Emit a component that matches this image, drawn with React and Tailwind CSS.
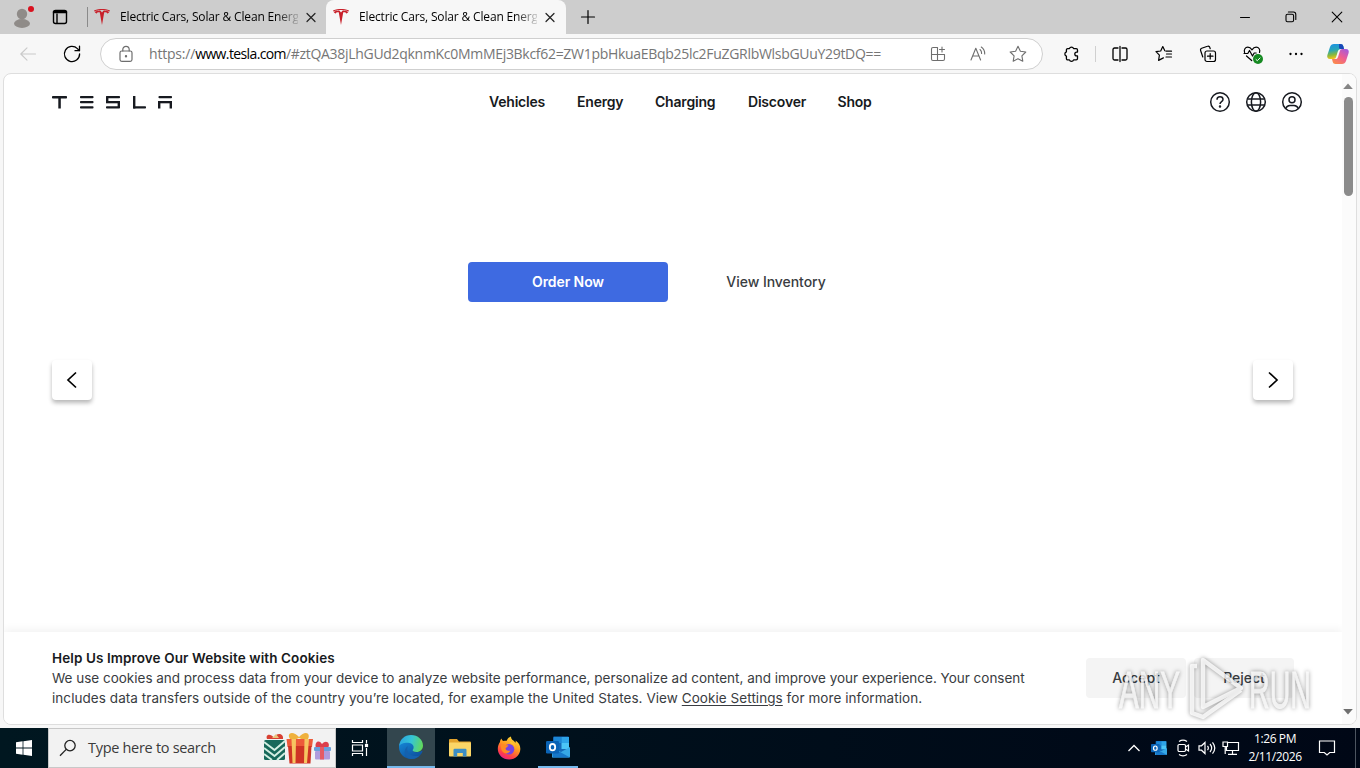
import { SiTesla } from 'react-icons/si';

const Icon = ({ size = 20, sw = 1.2, className = '', children }) => (
    <svg
        width={size}
        height={size}
        viewBox="0 0 20 20"
        fill="none"
        stroke="currentColor"
        strokeWidth={sw}
        strokeLinecap="round"
        strokeLinejoin="round"
        className={className}
    >
        {children}
    </svg>
);

const navItems = [
    { label: 'Vehicles', width: 'w-14' },
    { label: 'Energy', width: 'w-[46px]' },
    { label: 'Charging', width: 'w-[61px]' },
    { label: 'Discover', width: 'w-[57.5px]' },
    { label: 'Shop', width: 'w-[34px]' }
];

function TabTitle() {
    return (
        <span className="w-[178px] overflow-hidden whitespace-nowrap text-[12px] tracking-[-0.16px] text-black [mask-image:linear-gradient(to_right,black_156px,transparent_182px)]">
            Electric Cars, Solar &amp; Clean Energy
        </span>
    );
}

function CloseIcon() {
    return (
        <Icon size={20} sw={1.2} className="text-[#222]">
            <path d="M6 6.500l8 8M14 6.500l-8 8" />
        </Icon>
    );
}

function TabBar() {
    return (
        <div className="flex h-[34px] items-center bg-[#cdcdcd]">
            <div className="relative ml-2 flex w-7 justify-center">
                <svg width="20" height="22" viewBox="0 0 20 22" fill="#8f8b88">
                    <circle cx="10" cy="8" r="5.2" />
                    <ellipse cx="10" cy="17.500" rx="8" ry="4.4" />
                </svg>
                <span className="absolute top-0 right-[2px] h-1.5 w-1.5 rounded-full bg-[#d9121f]" />
            </div>
            <div className="flex w-12 justify-center text-black">
                <Icon size={20} sw={1.4}>
                    <rect x="3.5" y="3.5" width="13" height="13" rx="2" />
                    <path d="M4 5h12" strokeWidth="2.500" />
                    <path d="M7 7v9" />
                </Icon>
            </div>
            <div className="ml-[3px] h-5 w-px bg-[#8a8a8a]" />
            <div className="flex w-[238px] items-center pl-1.5">
                <SiTesla size={16} color="#c8202a" />
                <span className="w-[10px]" />
                <TabTitle />
                <span className="ml-[3px]"><CloseIcon /></span>
            </div>
            <div className="flex h-full w-[240px] items-center rounded-t-lg bg-[#f7f7f7] pl-[7px]">
                <SiTesla size={16} color="#c8202a" />
                <span className="w-[10px]" />
                <TabTitle />
                <span className="ml-[3px]"><CloseIcon /></span>
            </div>
            <div className="ml-[12px] text-black">
                <Icon sw={1.2}><path d="M3.5 10h13M10 3.5v13" /></Icon>
            </div>
            <div className="ml-auto flex items-center text-black">
                <div className="flex w-[46px] justify-center">
                    <Icon sw={1}><path d="M5.5 10.5h9" /></Icon>
                </div>
                <div className="flex w-[46px] justify-center">
                    <Icon sw={1.1}>
                        <rect x="5" y="7.2" width="7.6" height="7.6" rx="1.5" />
                        <path d="M7.4 5h5a2.4 2.4 0 0 1 2.4 2.4v5" />
                    </Icon>
                </div>
                <div className="flex w-[46px] justify-center">
                    <Icon sw={1.1}><path d="M5.2 5.2l9.6 9.6M14.8 5.2l-9.6 9.6" /></Icon>
                </div>
            </div>
        </div>
    );
}

function CopilotIcon() {
    return (
        <svg width="24" height="24" viewBox="0 0 24 24">
            <defs>
                <linearGradient id="cpA" x1="0" y1="0" x2="0.2" y2="1">
                    <stop offset="0" stopColor="#1b8fe8" />
                    <stop offset="0.45" stopColor="#28a6b8" />
                    <stop offset="0.75" stopColor="#86b840" />
                    <stop offset="1" stopColor="#f0c31c" />
                </linearGradient>
                <linearGradient id="cpB" x1="0.9" y1="0" x2="0.2" y2="1">
                    <stop offset="0" stopColor="#a05be0" />
                    <stop offset="0.5" stopColor="#ee5d93" />
                    <stop offset="1" stopColor="#fb8a4a" />
                </linearGradient>
            </defs>
            <path d="M8 2h6.5c1.6 0 2.3.8 2.8 2.2L18 7h-3c-2 0-2.7 1-3.2 2.6l-1.6 5.2C9.7 16.300 9 17 7.500 17H4c-2.300 0-3.300-1.700-2.600-4L4 5c.7-2 1.900-3 4-3z" fill="url(#cpA)" />
            <path d="M13 2h1.500c1.600 0 2.300.8 2.800 2.200L18 7h-3c-1 0-1.700-.3-2-1.300z" fill="#1948b8" />
            <path d="M16 22H9.500c-1.600 0-2.300-.8-2.800-2.200L6 17h3c2 0 2.700-1 3.200-2.600l1.600-5.200C14.300 7.700 15 7 16.500 7H20c2.300 0 3.300 1.700 2.600 4L20 19c-.7 2-1.900 3-4 3z" fill="url(#cpB)" />
        </svg>
    );
}

function Toolbar() {
    return (
        <div className="flex h-[39px] items-center bg-[#f7f7f7] pl-1.5 text-black">
            <div className="flex w-11 justify-center text-[#c9c9c9]">
                <Icon sw={1.1}><path d="M17.500 10H2.800M9 3.800L2.800 10 9 16.200" /></Icon>
            </div>
            <div className="flex w-11 justify-center">
                <Icon sw={1.3}>
                    <path d="M17.600 10A7.600 7.600 0 1 1 15.400 4.600L17.200 6.500" />
                    <path d="M17.500 2.200v4.500H13" />
                </Icon>
            </div>
            <div className="mt-px ml-1.5 flex h-8 w-[943px] items-center rounded-full border border-[#cfcfcf] bg-white pr-1 pl-[15px] text-[#6e6e6e]">
                <Icon sw={1.2}>
                    <rect x="4" y="7" width="12" height="10.300" rx="1.800" />
                    <path d="M6.800 7V5.500a3.200 3.200 0 0 1 6.400 0V7" />
                    <circle cx="10" cy="12.200" r="0.600" fill="currentColor" />
                </Icon>
                <span className="mb-0.5 ml-[13px] flex-1 text-[14px] whitespace-nowrap text-[#767676]">
                    <span className="tracking-[-0.2px]">https://</span>
                    <span className="tracking-[-0.62px] text-black">www.tesla.com</span>
                    <span className="tracking-[-0.3px]">/#ztQA38jLhGUd2qknmKc0MmMEj3Bkcf62=ZW1pbHkuaEBqb25lc2FuZGRlbWlsbGUuY29tDQ==</span>
                </span>
                <span className="flex w-10 justify-center">
                    <Icon sw={1.1}>
                        <path d="M9.500 3.500H5A1.500 1.500 0 0 0 3.500 5v10A1.500 1.500 0 0 0 5 16.500h10a1.500 1.500 0 0 0 1.500-1.500v-4.500h-13M9.500 3.500v13M14 3v5M11.500 5.500h5" />
                    </Icon>
                </span>
                <span className="flex w-10 justify-center">
                    <Icon sw={1.1}>
                        <path d="M3 16L7.800 4.200 12.600 16M4.600 12H11M12 5.500c1.200 1 1.700 2.300 1.600 4M13.300 3c2.300 1.600 3.500 4 3.400 7" />
                    </Icon>
                </span>
                <span className="flex w-10 justify-center">
                    <Icon sw={1.1}>
                        <path d="M10 2.300l2.400 4.900 5.400.8-3.900 3.800.9 5.400L10 14.700l-4.800 2.500.9-5.400L2.200 8l5.400-.8z" />
                    </Icon>
                </span>
            </div>
            <div className="ml-1.5 flex w-11 justify-center">
                <Icon sw={1.3}>
                    <path d="M6.700 4.600H8.400a2.200 2.200 0 0 1 4.200 0h2.600a1.300 1.300 0 0 1 1.300 1.300V8.100h-.8a1.900 1.900 0 0 0 0 3.800h.8v2.700a1.300 1.300 0 0 1-1.300 1.300H12.600a2.200 2.200 0 0 1-4.200 0H6.700a1.300 1.300 0 0 1-1.300-1.300V12.100a2.200 2.200 0 0 1 0-4.200V5.900a1.300 1.300 0 0 1 1.300-1.300z" />
                </Icon>
            </div>
            <div className="ml-0.5 h-4 w-px bg-[#d0d0d0]" />
            <div className="ml-0.5 flex w-11 justify-center">
                <Icon sw={1.3}>
                    <path d="M8 4H4.500A1.500 1.500 0 0 0 3 5.500v9A1.500 1.500 0 0 0 4.500 16H8M12 4h3.500A1.500 1.500 0 0 1 17 5.500v9a1.500 1.500 0 0 1-1.500 1.500H12M10 2.500v15" />
                </Icon>
            </div>
            <div className="flex w-11 justify-center">
                <Icon sw={1.2}>
                    <path d="M12 7.200h5.500M12.500 10h5M12 13h5.500M10.800 6.700L8.800 2.500 6.700 7l-4.700.7 3.400 3.400-.8 5.300 4.800-2.500" />
                </Icon>
            </div>
            <div className="flex w-11 justify-center">
                <Icon sw={1.2}>
                    <rect x="7" y="7" width="10.500" height="10.500" rx="2" />
                    <path d="M12.200 9.500v5.500M9.500 12.200H15M4.800 13L2.600 6.500A1.800 1.800 0 0 1 3.700 4.200L9.500 2.300a1.800 1.800 0 0 1 2.300 1.100l.4 1.300" />
                </Icon>
            </div>
            <div className="relative flex w-11 justify-center">
                <Icon sw={1.2}>
                    <path d="M2.600 8.500C1.600 5.600 3.300 3.200 5.800 3.200c1.900 0 3.200 1.100 4.200 2.600 1-1.500 2.300-2.600 4.200-2.600 2.600 0 4.300 2.400 3.300 5.300M4.500 12l5.200 4.500M2 9.500h3.800L7.500 6.500l3 5.500 1.700-3h2" />
                </Icon>
                <svg width="10" height="10" viewBox="0 0 10 10" className="absolute right-[11px] bottom-0">
                    <circle cx="5" cy="5" r="5" fill="#168a22" />
                    <path d="M2.700 5.200l1.600 1.500 3-3" stroke="#fff" fill="none" />
                </svg>
            </div>
            <div className="flex w-11 justify-center">
                <Icon><path d="M4.500 10h.01M10 10h.01M15.500 10h.01" strokeWidth="2.300" /></Icon>
            </div>
            <div className="flex w-10 justify-center"><CopilotIcon /></div>
        </div>
    );
}

function TeslaWordmark() {
    return (
        <svg width="121" height="13" viewBox="0 0 121 13" fill="#171a20">
            <rect x="0" y="0" width="15" height="2.5" rx="0.8" />
            <rect x="6.300" y="2" width="2.5" height="10.5" />
            <rect x="28" y="0" width="13.5" height="2.3" rx="0.8" />
            <rect x="28" y="5" width="13.5" height="2.3" rx="0.8" />
            <rect x="28" y="10.2" width="13.5" height="2.3" rx="0.8" />
            <rect x="54" y="0" width="14" height="2.3" rx="0.8" />
            <rect x="54" y="0.5" width="2.4" height="6" />
            <rect x="54" y="5" width="14" height="2.3" />
            <rect x="65.600" y="5.5" width="2.4" height="6.5" />
            <rect x="54" y="10.2" width="14" height="2.3" rx="0.8" />
            <rect x="81" y="0" width="2.4" height="12.5" />
            <rect x="81" y="10.2" width="13" height="2.3" rx="0.8" />
            <rect x="106.5" y="0" width="13.5" height="2.3" rx="0.8" />
            <rect x="106" y="5" width="14" height="2.3" />
            <rect x="106" y="5" width="2.4" height="7.5" />
            <rect x="117.600" y="5" width="2.4" height="7.5" />
        </svg>
    );
}

function SiteHeader() {
    return (
        <header className="flex h-14 items-center pr-[38px] pl-12">
            <TeslaWordmark />
            <nav className="ml-[316px] flex gap-8 text-[14px] leading-5 font-semibold text-[#171a20]">
                {navItems.map((item) => (
                    <a key={item.label} className={`${item.width} whitespace-nowrap tracking-[-0.2px]`}>{item.label}</a>
                ))}
            </nav>
            <div className="ml-auto flex gap-3 text-[#171a20]">
                <svg width="24" height="24" viewBox="0 0 24 24" fill="none" stroke="currentColor" strokeWidth="1.5">
                    <circle cx="12" cy="12" r="9.3" />
                    <path d="M9 9.700c0-1.800 1.300-2.900 3-2.900s3 1 3 2.700c0 2.200-3 2.200-3 4.500" />
                    <circle cx="12" cy="16.500" r="0.500" fill="currentColor" />
                </svg>
                <svg width="24" height="24" viewBox="0 0 24 24" fill="none" stroke="currentColor" strokeWidth="1.5">
                    <circle cx="12" cy="12" r="9.3" />
                    <ellipse cx="12" cy="12" rx="4.6" ry="9.3" />
                    <path d="M3.300 9h17.400M3.300 15h17.400" />
                </svg>
                <svg width="24" height="24" viewBox="0 0 24 24" fill="none" stroke="currentColor" strokeWidth="1.5">
                    <circle cx="12" cy="12" r="9.3" />
                    <circle cx="12" cy="9.700" r="3" />
                    <path d="M5.800 18.600c.6-2.100 2-3.100 4.200-3.100h4c2.200 0 3.600 1 4.200 3.100" />
                </svg>
            </div>
        </header>
    );
}

function CarouselButton({ path }) {
    return (
        <button className="flex h-10 w-10 items-center justify-center rounded bg-white text-black shadow-[0_3px_4px_rgba(0,0,0,0.28)]">
            <svg width="20" height="20" viewBox="0 0 20 20" fill="none" stroke="currentColor" strokeWidth="1.7">
                <path d={path} />
            </svg>
        </button>
    );
}

function CookieBanner() {
    return (
        <div className="flex h-[92px] items-start bg-white pt-4 pl-12 text-[13.5px] leading-5 shadow-[0_-3px_8px_rgba(0,0,0,0.05)]">
            <div className="w-[1000px] whitespace-nowrap text-[#393c41]">
                <div className="font-semibold tracking-[0.1px] text-[#171a20]">Help Us Improve Our Website with Cookies</div>
                <div className="tracking-[-0.01px]">
                    We use cookies and process data from your device to analyze website performance, personalize ad content, and improve your experience. Your consent
                </div>
                <div className="tracking-[0.06px]">
                    includes data transfers outside of the country you’re located, for example the United States. View <span className="underline underline-offset-2">Cookie Settings</span> for more information.
                </div>
            </div>
            <div className="mt-2.5 ml-[34px] flex gap-2 text-[14px] font-medium text-[#393c41]">
                <button className="h-10 w-[100px] rounded bg-[#f4f4f4] leading-5">Accept</button>
                <button className="h-10 w-[100px] rounded bg-[#f4f4f4] leading-5">Reject</button>
            </div>
        </div>
    );
}

function Page() {
    return (
        <div className="mx-[3px] flex h-[652px] overflow-hidden rounded-lg border border-[#dedede] bg-white font-['Inter',sans-serif]">
            <div className="flex w-[1338px] flex-col">
                <SiteHeader />
                <div className="mt-[132px] flex h-10 pl-[464px] text-[14px] leading-5">
                    <button className="w-[200px] rounded bg-[#3e6ae1] font-semibold tracking-[-0.08px] text-white">Order Now</button>
                    <button className="ml-2 w-[200px] font-medium tracking-[-0.05px] text-[#393c41]">View Inventory</button>
                </div>
                <div className="mt-[58px] flex justify-between pr-[49px] pl-12">
                    <CarouselButton path="M14 2.500L6 10l8 7.500" />
                    <CarouselButton path="M6 2.500l8 7.500-8 7.500" />
                </div>
                <div className="mt-auto"><CookieBanner /></div>
            </div>
            <div className="flex w-[14px] flex-col items-center bg-[#fbfbfb] pt-2 pr-[2px] pb-2">
                <svg width="10" height="8" viewBox="0 0 10 8" fill="#858585"><path d="M5 1.500L9.800 7H.2z" /></svg>
                <div className="mt-[7px] h-[99px] w-[9px] rounded-full bg-[#8b8b8b]" />
                <svg width="10" height="8" viewBox="0 0 10 8" fill="#6f6f6f" className="mt-auto"><path d="M5 6.500L.2 1h9.600z" /></svg>
            </div>
        </div>
    );
}

function Gifts() {
    return (
        <svg width="70" height="34" viewBox="0 0 70 34">
            <path d="M4 8C2 3 8 2 11 7c2-6 10-5 9 1z" fill="#d84032" />
            <path d="M9 7l4-4 3 4z" fill="#e9c37c" />
            <rect x="1" y="9" width="21" height="20" rx="1.5" fill="#17695a" />
            <path d="M1 11l10.500 8L22 10M1 17l10.500 8L22 16M1 23l8 6M22 22l-8 7" stroke="#d3efe2" strokeWidth="2" fill="none" />
            <path d="M27 8C23 2 30-1 36 6c6-7 12-4 9 2l-4 1-5-2-5 2z" fill="#efb13c" />
            <path d="M23.500 8h26.500l-1 8H24.500z" fill="#ed5a3a" />
            <path d="M25 15h23.500l-1 17.500h-21z" fill="#cf3325" />
            <path d="M28.500 8h4.500l-.5 24h-3zM41.500 8H46l-2 24h-3z" fill="#f6c561" />
            <path d="M53 17c-2-6 3-9 6-4 4-5 9-1 6 4z" fill="#dc3f4c" />
            <rect x="51" y="16" width="17" height="4" rx="1" fill="#6a9fda" />
            <rect x="52" y="20" width="15" height="8.500" rx="1" fill="#b09bdd" />
            <rect x="57" y="16" width="4" height="12.5" fill="#e55b65" />
        </svg>
    );
}

function EdgeIcon() {
    return (
        <svg width="26" height="26" viewBox="0 0 26 26">
            <defs>
                <linearGradient id="edgeTop" x1="0" y1="0.300" x2="1" y2="0.500">
                    <stop offset="0" stopColor="#2aa3e0" />
                    <stop offset="0.500" stopColor="#35c5d6" />
                    <stop offset="1" stopColor="#62d85c" />
                </linearGradient>
                <linearGradient id="edgeLow" x1="0" y1="0" x2="0.700" y2="1">
                    <stop offset="0" stopColor="#1588d8" />
                    <stop offset="1" stopColor="#0d4f9d" />
                </linearGradient>
            </defs>
            <path d="M1 13C1 9 5 7.500 9 7.500c4 0 7 2 7.500 5.500l-1.500 3c-.8 1.200.7 2.200 3.700 2.200 2 0 3.800-.6 4.800-1.200.8-.4 1.200.2.800.9C22 22.500 18 25 13 25 6.400 25 1 19.600 1 13z" fill="url(#edgeLow)" />
            <path d="M1 12.500C1.500 5.500 6.500 1 13 1c7 0 12 5 12 10.500 0 4-3 6.500-6.500 6.500-3 0-4.500-1-3.700-2.200 2-2.500.5-6.300-3.500-6.800C6.500 8.400 2 10 1 12.500z" fill="url(#edgeTop)" />
            <path d="M10 12c-2.500 5 1.500 10 8 10 1.500 0 3-.3 4-1-2.500 3.300-6 4.500-9.500 4C6 24 4.500 15.500 10 12z" fill="#1461ae" />
        </svg>
    );
}

function FolderIcon() {
    return (
        <svg width="22" height="20" viewBox="0 0 22 20">
            <path d="M0 2a1 1 0 0 1 1-1h7l2 2.500h11a1 1 0 0 1 1 1V8H0z" fill="#e3a32c" />
            <rect y="4.500" width="22" height="14" rx="0.800" fill="#fbd667" />
            <path d="M4.500 18.500V12a1.200 1.200 0 0 1 1.200-1.200h10.600a1.200 1.200 0 0 1 1.200 1.200v6.500h-3.700V15H8.200v3.500z" fill="#3c8ec5" />
        </svg>
    );
}

function FirefoxIcon() {
    return (
        <svg width="24" height="24" viewBox="0 0 24 24">
            <defs>
                <linearGradient id="ff" x1="0.800" y1="0" x2="0.300" y2="1">
                    <stop offset="0" stopColor="#ffe43b" />
                    <stop offset="0.450" stopColor="#ff9a20" />
                    <stop offset="0.800" stopColor="#ff3d47" />
                    <stop offset="1" stopColor="#e6218a" />
                </linearGradient>
            </defs>
            <path d="M3 6c0-1.500.7-2.700 1.500-3.500C4.800 4 5.500 4.700 6.700 5c1-.3 2-.4 3-.2C10.500 2.500 12.300 1 14 .4c0 2 1 3.300 2.700 4.400.8.500 1.200 1.200 1.600 2 .5-.7.5-1.500.3-2.300 3.200 2.300 5 5.200 4.700 9C23 19 18.500 23.400 12.200 23.500 5.700 23.500.8 18.700.8 13c0-2.600.8-5 2.200-7z" fill="url(#ff)" />
            <circle cx="12" cy="13.200" r="5.300" fill="#7543e3" />
            <path d="M4 9c3-1.500 5 .5 7.500.2-.5 1.800-2.500 1.800-3 3.300.5 2 2.500 2.800 5 1.900-1.200 2.300-3.200 3.300-5.500 2.900C5 16.500 3.500 12.500 4 9z" fill="#ff8b22" />
            <path d="M12 5.500c4 0 6.500 3 6.300 7-.3-2.800-2-4.700-4.300-5z" fill="#ffc62f" />
        </svg>
    );
}

function OutlookIcon({ size = 24 }) {
    return (
        <svg width={size} height={size} viewBox="0 0 24 24">
            <rect x="7" y="1.5" width="16" height="20" rx="1.2" fill="#1469b8" />
            <path d="M8 2h7.500v6H8z" fill="#1c87d6" />
            <path d="M15.500 2H23v6h-7.500z" fill="#2ea4e8" />
            <path d="M15.500 8H23v6h-7.500z" fill="#4bc5f6" />
            <path d="M6 22.500V12l9 5 9-5v9.500a1 1 0 0 1-1 1z" fill="#36a8e5" />
            <path d="M24 22.500H7L6 12.500l9 5z" fill="#1778c9" />
            <rect x="0" y="6" width="13" height="12.5" rx="1.2" fill="#0a63b5" />
            <ellipse cx="6.500" cy="12.200" rx="2.700" ry="3.200" fill="none" stroke="#fff" strokeWidth="1.8" />
        </svg>
    );
}

function Taskbar() {
    return (
        <div className="mt-[3px] flex h-10 items-center bg-gradient-to-r from-[#001720] to-[#000716] text-white">
            <div className="flex w-12 justify-center">
                <svg width="16" height="16" viewBox="0 0 16 16" fill="#fff">
                    <path d="M0 2.200L6.600 1.300v6.300H0zM7.400 1.200L16 0v7.600H7.400zM0 8.400h6.600v6.300L0 13.800zM7.400 8.400H16V16l-8.600-1.200z" />
                </svg>
            </div>
            <div className="flex h-10 w-72 items-center border border-[#c8c8c8] bg-[#f2f2f2] pl-2.5 text-[#3b3b3b]">
                <svg width="18" height="18" viewBox="0 0 18 18" fill="none" stroke="#222" strokeWidth="1.3">
                    <circle cx="11" cy="6.600" r="5.2" />
                    <path d="M7.200 10.400L1 16.800" />
                </svg>
                <span className="ml-[11px] w-[175px] text-[14.5px] tracking-[-0.3px] whitespace-nowrap">Type here to search</span>
                <Gifts />
            </div>
            <div className="flex w-[51px] justify-center pr-1">
                <svg width="18" height="18" viewBox="0 0 18 18" fill="none" stroke="#fff" strokeWidth="1.2">
                    <path d="M1.500 1v2.500h10V1M1.500 17v-2.500h10V17M1.500 6h10v6h-10zM15.500 1v3.500M15.500 9v8" />
                    <rect x="14.500" y="5.500" width="2" height="2" fill="#fff" />
                </svg>
            </div>
            <div className="flex h-10 w-12 items-center justify-center border-b-2 border-[#76b9ed] bg-[#33464e]"><EdgeIcon /></div>
            <div className="flex w-[49px] justify-center"><FolderIcon /></div>
            <div className="flex w-[49px] justify-center"><FirefoxIcon /></div>
            <div className="ml-[5px] flex h-10 w-10 items-center justify-center border-b-2 border-[#76b9ed]"><OutlookIcon /></div>
            <div className="ml-auto flex items-center">
                <svg width="14" height="8" viewBox="0 0 14 8" fill="none" stroke="#fff" strokeWidth="1.3"><path d="M1.500 7L7 1.500 12.500 7" /></svg>
                <span className="ml-2.5"><OutlookIcon size={16} /></span>
                <svg width="16" height="18" viewBox="0 0 16 18" fill="none" stroke="#fff" strokeWidth="1.2" className="ml-2">
                    <path d="M4 2.500C6.500.8 9.500.8 12 2.500M4 15.500c2.500 1.700 5.500 1.700 8 0M10.500 8l3-2v6l-3-2" />
                    <rect x="3" y="5.500" width="7.500" height="7" rx="1.2" />
                </svg>
                <svg width="18" height="16" viewBox="0 0 18 16" fill="none" stroke="#fff" strokeWidth="1.2" className="ml-[7px]">
                    <path d="M1 5.800h2.500L7 2.500v11L3.500 10.200H1zM9.500 5.800c1 1.300 1 3.100 0 4.400M12 4c2 2.400 2 5.600 0 8M14.500 2.300c2.800 3.500 2.800 7.900 0 11.400" />
                </svg>
                <svg width="18" height="16" viewBox="0 0 18 16" fill="none" stroke="#fff" strokeWidth="1.2" className="ml-1.5">
                    <path d="M6 2.500h10.500v8H4.500V7M10.500 10.500v3.500M6 14.300h9M1 2h4.500v4.500H1zM3.200 6.500v7.500" />
                </svg>
                <div className="ml-[5px] flex w-[60px] flex-col items-center text-[12px] leading-[18px] tracking-[-0.4px] whitespace-nowrap">
                    <span>1:26 PM</span>
                    <span>2/11/2026</span>
                </div>
                <svg width="18" height="18" viewBox="0 0 18 18" fill="none" stroke="#fff" strokeWidth="1.2" className="ml-[13px]">
                    <path d="M1.500 2h15v11.500h-4.800L9 16l-2.700-2.500H1.500z" />
                </svg>
                <div className="ml-[19px] h-10 w-px bg-[#4d5560]" />
                <div className="w-[4px]" />
            </div>
        </div>
    );
}

// Translucent recorder mark lying over the lower right corner
function Watermark() {
    return (
        <svg width="220" height="72" viewBox="0 0 220 72" className="pointer-events-none absolute top-[652px] left-[1113px] [filter:drop-shadow(0_0_2px_rgba(0,0,0,0.5))]">
            <g opacity="0.8" fill="#fff" stroke="#fff">
                <text x="6" y="56" textLength="61" lengthAdjust="spacingAndGlyphs" fontSize="52" strokeWidth="0.8" className="font-['Liberation_Sans',sans-serif]">ANY</text>
                <text x="136" y="56" textLength="62" lengthAdjust="spacingAndGlyphs" fontSize="52" strokeWidth="0.8" className="font-['Liberation_Sans',sans-serif]">RUN</text>
                <g fill="none" strokeWidth="4.500" strokeLinejoin="round">
                    <path d="M90 8l38 28-38 19z" />
                    <path d="M84 14h-5v47l11 4 38-27" />
                </g>
            </g>
        </svg>
    );
}

export default function App() {
    return (
        <div className="relative h-[768px] w-[1360px] overflow-hidden bg-[#f7f7f7] font-['Open_Sans',sans-serif]">
            <TabBar />
            <Toolbar />
            <Page />
            <Taskbar />
            <Watermark />
        </div>
    );
}
